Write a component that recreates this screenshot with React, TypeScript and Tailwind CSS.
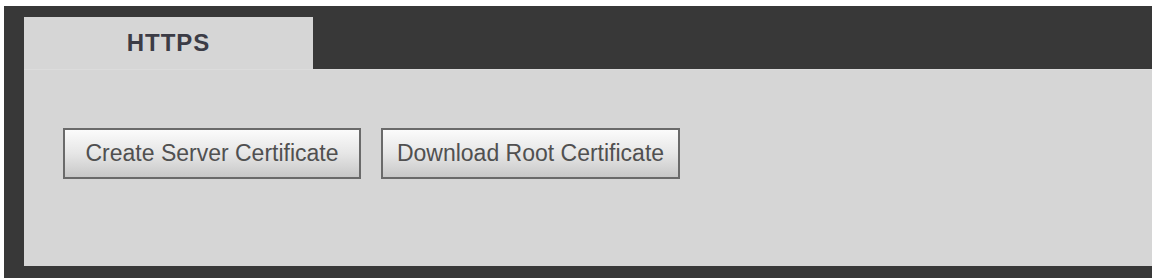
export default function App() {
  const btn =
    "h-[51px] border-2 border-[#6a6a6a] bg-gradient-to-b from-[#fbfbfb] via-[#e6e6e6] to-[#c8c8c8] text-[#505050] text-[23px] flex items-center justify-center whitespace-nowrap";

  return (
    <div className="w-[1156px] h-[279px] bg-white pt-[6px] pl-[4px]" style={{ fontFamily: '"Liberation Sans", Arial, sans-serif' }}>
      <div className="w-[1148px] h-[272px] bg-[#383838] pl-[20px] pt-[11px] pb-[12px] flex flex-col">
        {/* tab strip */}
        <div className="h-[52px] flex shrink-0">
          <div className="w-[289px] bg-[#d6d6d6] flex items-center justify-center text-[24px] font-bold tracking-[1px] text-[#3c3c46]">
            HTTPS
          </div>
        </div>

        {/* content */}
        <div className="flex-1 bg-[#d6d6d6] border-t border-[#dcdcdc] pl-[39px] pt-[58px] flex items-start gap-[20px]">
          <button className={`${btn} w-[298px]`}>Create Server Certificate</button>
          <button className={`${btn} w-[299px]`}>Download Root Certificate</button>
        </div>
      </div>
    </div>
  );
}
